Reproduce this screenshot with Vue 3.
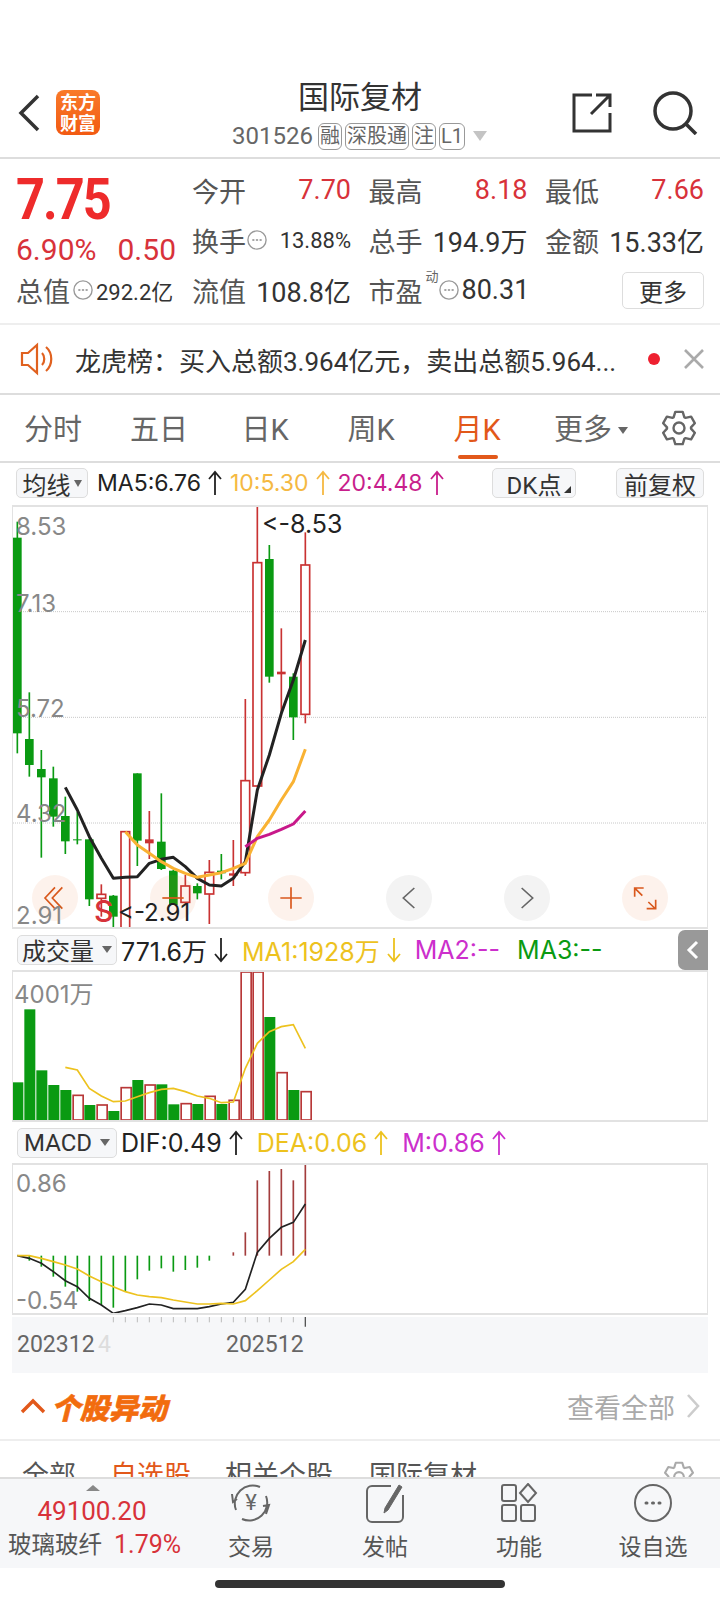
<template>
  <div class="page">
    <header class="head">
      <div class="head-left">
        <svg class="back" viewBox="0 0 24 40"><path d="M21 3 4 20l17 17" /></svg>
        <div class="logo"><span>东方</span><span>财富</span></div>
      </div>
      <div class="head-mid">
        <div class="title">国际复材</div>
        <div class="sub">
          <span class="code">301526</span>
          <span class="tag">融</span>
          <span class="tag">深股通</span>
          <span class="tag">注</span>
          <span class="tag">L1</span>
          <i class="tri-down"></i>
        </div>
      </div>
      <div class="head-right">
        <svg class="share" viewBox="0 0 40 40">
          <path d="M20 2H2v36h36V20M24 2h14v12M37 3 19 21" />
        </svg>
        <svg class="search" viewBox="0 0 46 44">
          <circle cx="21" cy="20" r="18" />
          <path d="m33 32 11 11" />
        </svg>
      </div>
    </header>

    <section class="quote">
      <div class="q-left">
        <div class="price">7.75</div>
        <div class="chg"><span>6.90%</span><span>0.50</span></div>
        <div class="cell">
          <span class="lab">总值</span>
          <svg class="dots" viewBox="0 0 22 22"><circle cx="11" cy="11" r="10" /><path d="M6.5 11h1M10.5 11h1M14.5 11h1" /></svg>
          <span class="val small ml3">292.2亿</span>
        </div>
      </div>
      <div class="q-grid">
        <div class="cell between"><span class="lab">今开</span><span class="val red">7.70</span></div>
        <div class="cell between"><span class="lab">最高</span><span class="val red">8.18</span></div>
        <div class="cell between"><span class="lab">最低</span><span class="val red">7.66</span></div>
        <div class="cell between">
          <span class="lab">换手</span>
          <svg class="dots" viewBox="0 0 22 22"><circle cx="11" cy="11" r="10" /><path d="M6.5 11h1M10.5 11h1M14.5 11h1" /></svg>
          <span class="val small">13.88%</span>
        </div>
        <div class="cell between"><span class="lab">总手</span><span class="val">194.9万</span></div>
        <div class="cell between"><span class="lab">金额</span><span class="val">15.33亿</span></div>
        <div class="cell between"><span class="lab">流值</span><span class="val">108.8亿</span></div>
        <div class="cell">
          <span class="lab">市盈</span>
          <sup class="dyn">动</sup>
          <svg class="dots" viewBox="0 0 22 22"><circle cx="11" cy="11" r="10" /><path d="M6.5 11h1M10.5 11h1M14.5 11h1" /></svg>
          <span class="val ml3">80.31</span>
        </div>
        <div class="cell end"><button class="more">更多</button></div>
      </div>
    </section>

    <section class="notice">
      <svg class="horn" viewBox="0 0 34 34">
        <path d="M2 11h6l9-8v28l-9-8H2zM22 11c3 3 3 9 0 12M26 5c7 6 7 18 0 24" />
      </svg>
      <span class="notice-text">龙虎榜：买入总额3.964亿元，卖出总额5.964...</span>
      <i class="dot"></i>
      <svg class="close" viewBox="0 0 20 20"><path d="m1 1 18 18M19 1 1 19" /></svg>
    </section>

    <nav class="tabs">
      <span v-for="t in tabs" :key="t" class="tab" :class="{ on: t === '月K' }">{{ t }}</span>
      <span class="tab tab-more">更多<i class="tri-down dark"></i></span>
      <svg class="gear" viewBox="0 0 34 36"><path :d="gearPath" /><circle cx="17" cy="18" r="5.5" /></svg>
    </nav>

    <div class="ma-row">
      <span class="sel sel-avg">均线<i class="tri-down dark sm"></i></span>
      <span v-for="m in maItems" :key="m.text" class="ma" :class="m.cls">
        {{ m.text }}
        <svg class="arr" viewBox="0 0 16 26"><path d="M8 25V2M2 9l6-7 6 7" /></svg>
      </span>
      <span class="sel sel-dk">DK点<i class="corner"></i></span>
      <span class="sel sel-fq">前复权</span>
    </div>

    <div class="panel panel-k">
      <svg class="canvas" viewBox="39 21 2082 1260">
        <line v-for="g in [335, 652, 969]" :key="g" x1="39" x2="2121" :y1="g" :y2="g" class="grid" />
        <g v-for="c in candles" :key="c.i">
          <line :x1="c.x" :x2="c.x" :y1="c.w0" :y2="c.w1" :class="c.red ? 'wick-r' : 'wick-g'" />
          <rect :x="c.x - 13" :y="c.b0" width="26" :height="c.b1 - c.b0" :class="c.red ? (c.flat ? 'flat-r' : 'hollow-r') : 'solid-g'" />
        </g>
        <polyline :points="ma5" class="ln ln-k" />
        <polyline :points="ma10" class="ln ln-o" />
        <polyline :points="ma20" class="ln ln-m" />
        <circle cx="165" cy="1194" r="69" class="btn-o" />
        <circle cx="519" cy="1194" r="69" class="btn-o" />
        <circle cx="873" cy="1194" r="69" class="btn-o" />
        <circle cx="1227" cy="1194" r="69" class="btn-g" />
        <circle cx="1581" cy="1194" r="69" class="btn-g" />
        <circle cx="1935" cy="1194" r="69" class="btn-o" />
        <path class="ico-o" d="M165 1162l-30 32 30 32M187 1162l-30 32 30 32" />
        <path class="ico-o" d="M487 1194h64" />
        <path class="ico-o" d="M841 1194h64M873 1162v64" />
        <path class="ico-g" d="M1243 1164l-33 30 33 30" />
        <path class="ico-g" d="M1565 1164l33 30-33 30" />
        <path class="ico-o" d="M1904 1190v-26h27M1905 1165l22 22M1945 1206l22 21M1940 1226h27v-27" />
      </svg>
      <span v-for="l in kLabels" :key="l.t" class="lbl" :class="l.cls" :style="{ left: l.x + 'px', top: l.y + 'px' }">{{ l.t }}</span>
    </div>

    <div class="ind-row">
      <span class="sel sel-ind">成交量<i class="tri-down dark"></i></span>
      <span v-for="m in volItems" :key="m.text" class="ma" :class="[m.cls, { gapr: !m.arrow }]">
        {{ m.text }}
        <svg v-if="m.arrow" class="arr" viewBox="0 0 16 26"><path d="M8 1v23M2 17l6 7 6-7" /></svg>
      </span>
      <div class="side-tab">
        <svg viewBox="0 0 14 22"><path d="M11 3 3 11l8 8" /></svg>
      </div>
    </div>

    <div class="panel panel-vol">
      <svg class="canvas" viewBox="39 156 2082 444">
        <template v-for="b in volBars" :key="b.i">
          <rect v-if="b.red" :x="b.x + 2.5" :y="b.top" width="30" :height="600 - b.top" class="vol-r" />
          <rect v-else :x="b.x" :y="b.top" width="33" :height="600 - b.top" class="solid-g" />
        </template>
        <polyline :points="volMa" class="ln-thin" />
      </svg>
      <span class="lbl" :style="{ left: '1px', top: '8px' }">4001万</span>
    </div>

    <div class="ind-row">
      <span class="sel sel-ind">MACD<i class="tri-down dark"></i></span>
      <span v-for="m in macdItems" :key="m.text" class="ma" :class="m.cls">
        {{ m.text }}
        <svg class="arr" viewBox="0 0 16 26"><path d="M8 25V2M2 9l6-7 6 7" /></svg>
      </span>
    </div>

    <div class="panel panel-macd">
      <svg class="canvas" viewBox="39 735 2082 444">
        <line v-for="b in macdBars" :key="b.x" :x1="b.x" :x2="b.x" y1="1007" :y2="b.y" :class="b.y > 1007 ? 'bar-g' : 'bar-r'" />
        <polyline :points="dif" class="ln-dif" />
        <polyline :points="dea" class="ln-thin" />
      </svg>
      <span class="lbl" :style="{ left: '3px', top: '4px' }">0.86</span>
      <span class="lbl" :style="{ left: '3px', top: '121px' }">-0.54</span>
    </div>

    <div class="axis">
      <svg class="canvas" viewBox="36 1191 2088 168">
        <line v-for="x in ticks" :key="x" :x1="x" :x2="x" y1="1191" y2="1207" class="tick" />
        <line x1="916" x2="916" y1="1191" y2="1220" class="tick-end" />
      </svg>
      <span class="ax-lbl ax-1">202312</span>
      <span class="ax-lbl ax-fade">4</span>
      <span class="ax-lbl ax-2">202512</span>
    </div>

    <div class="move-head">
      <svg class="up" viewBox="0 0 26 16"><path d="M2 14 13 3l11 11" /></svg>
      <span class="move-title">个股异动</span>
      <span class="see-all">查看全部</span>
      <svg class="see-arrow" viewBox="0 0 14 26"><path d="m2 2 10 11L2 24" /></svg>
    </div>

    <div class="sub-tabs">
      <span class="st st-1">全部</span>
      <span class="st st-2">自选股</span>
      <span class="st st-3">相关个股</span>
      <span class="st st-4">国际复材</span>
      <svg class="gear gear-sm" viewBox="0 0 34 36"><path :d="gearPath" /><circle cx="17" cy="18" r="5.5" /></svg>
    </div>

    <footer class="bar">
      <div class="bar-idx">
        <i class="tri-up"></i>
        <div class="idx-num">49100.20</div>
        <div class="idx-line"><span>玻璃玻纤</span><span class="idx-pct">1.79%</span></div>
      </div>
      <div class="bar-item">
        <svg class="bi" viewBox="0 0 44 40">
          <path d="M31 4A18 18 0 0 0 7 27M13 36a18 18 0 0 0 24-23M3 11l1 8 4-3M37 31l3-9-6 1" />
          <text x="22" y="27" class="yen">¥</text>
        </svg>
        <span>交易</span>
      </div>
      <div class="bar-item">
        <svg class="bi" viewBox="0 0 44 40">
          <path d="M28 3H9a5 5 0 0 0-5 5v26a5 5 0 0 0 5 5h26a5 5 0 0 0 5-5V12" />
          <path class="pen" d="M36 2 22 25l-1 5 4-3L39 4z" />
        </svg>
        <span>发帖</span>
      </div>
      <div class="bar-item">
        <svg class="bi" viewBox="0 0 44 40">
          <rect x="5" y="2" width="14" height="16" rx="2" />
          <rect x="5" y="22" width="14" height="16" rx="2" />
          <rect x="24" y="22" width="14" height="16" rx="2" />
          <path d="m31 1 8 9-8 9-8-9z" />
        </svg>
        <span>功能</span>
      </div>
      <div class="bar-item">
        <svg class="bi" viewBox="0 0 44 40">
          <circle cx="22" cy="20" r="18" />
          <path class="dot3" d="M15 20h1M21.5 20h1M28 20h1" />
        </svg>
        <span>设自选</span>
      </div>
    </footer>
    <div class="home"><i></i></div>
  </div>
</template>

<script setup>
const tabs = ['分时', '五日', '日K', '周K', '月K']

const maItems = [
  { text: 'MA5:6.76', cls: 'c-k' },
  { text: '10:5.30', cls: 'c-o' },
  { text: '20:4.48', cls: 'c-m' },
]
const volItems = [
  { text: '771.6万', cls: 'c-k', arrow: true },
  { text: 'MA1:1928万', cls: 'c-y', arrow: true },
  { text: 'MA2:--', cls: 'c-p' },
  { text: 'MA3:--', cls: 'c-g' },
]
const macdItems = [
  { text: 'DIF:0.49', cls: 'c-k' },
  { text: 'DEA:0.06', cls: 'c-y' },
  { text: 'M:0.86', cls: 'c-p' },
]

// [red, wickTop, wickBottom, bodyTop, bodyBottom, flat], in 3x coordinates of the crop
const raw = [
  [0, 65, 760, 113, 700],
  [0, 577, 830, 717, 795],
  [0, 750, 1073, 807, 832],
  [0, 800, 980, 835, 950],
  [0, 890, 1062, 948, 1024],
  [0, 935, 1033, 1018, 1021],
  [0, 1018, 1218, 1018, 1198],
  [1, 1153, 1250, 1183, 1195],
  [0, 1185, 1285, 1187, 1250],
  [1, 995, 1285, 995, 1290],
  [0, 820, 1098, 820, 1022],
  [1, 933, 1077, 1018, 1030, 1],
  [0, 880, 1110, 1025, 1107],
  [0, 1110, 1215, 1112, 1215],
  [1, 1125, 1210, 1158, 1207],
  [0, 1150, 1198, 1158, 1180],
  [1, 1080, 1272, 1117, 1182],
  [0, 1062, 1138, 1112, 1120],
  [1, 1020, 1158, 1120, 1127, 1],
  [1, 597, 1128, 842, 1118],
  [1, 17, 860, 188, 858],
  [0, 135, 548, 177, 530],
  [1, 385, 640, 515, 523, 1],
  [0, 520, 720, 530, 652],
  [1, 97, 670, 195, 643],
]
const candles = raw.map((r, i) => ({
  i, x: 52 + 36 * i, red: !!r[0], w0: r[1], w1: r[2], b0: r[3], b1: r[4], flat: !!r[5],
}))

const line = (start, ys) => ys.map((y, i) => `${52 + 36 * (start + i)},${y}`).join(' ')

const ma5 = line(4, [862, 930, 1010, 1075, 1135, 1132, 1130, 1090, 1078, 1072, 1100, 1135, 1155, 1158, 1135, 1085, 870, 765, 640, 540, 420])
const ma10 = line(9, [995, 1035, 1060, 1085, 1105, 1120, 1132, 1125, 1118, 1105, 1090, 1010, 960, 900, 845, 748])
const ma20 = line(19, [1040, 1015, 1003, 988, 972, 933])

const kLabels = [
  { t: '8.53', x: 3, y: 5 },
  { t: '7.13', x: 3, y: 82 },
  { t: '5.72', x: 3, y: 187 },
  { t: '4.32', x: 3, y: 292 },
  { t: '2.91', x: 3, y: 394 },
  { t: '<-8.53', x: 249, y: 2, cls: 'dark wide' },
  { t: '<-2.91', x: 105, y: 391, cls: 'dark' },
  { t: 'S', x: 81, y: 389, cls: 'buy' },
]

const volTops = [487, 268, 451, 495, 510, -526, 555, -555, 573, -503, 480, -495, 493, 553, -551, 552, -529, 552, -541, -156, -156, 291, -458, 510, -515]
const volBars = volTops.map((t, i) => ({ i, x: 37 + 36 * i, top: Math.abs(t), red: t < 0 }))
const volMa = line(4, [442, 450, 505, 528, 545, 543, 530, 518, 508, 505, 515, 528, 535, 548, 546, 445, 370, 335, 320, 314, 385])

const macdYs = [1022, 1040, 1070, 1100, 1115, 1143, 1155, 1163, 1115, 1078, 1052, 1045, 1055, 1050, 1043, 1022, 1007, 997, 937, 781, 753, 747, 781, 731]
const macdBars = macdYs.map((y, i) => ({ x: 88 + 36 * i, y })).filter(b => b.y !== 1007)
const dif = line(0, [1007, 1015, 1030, 1055, 1082, 1100, 1135, 1155, 1180, 1172, 1163, 1152, 1155, 1166, 1166, 1166, 1160, 1152, 1147, 1108, 997, 955, 922, 907, 852])
const dea = line(0, [1007, 1007, 1015, 1025, 1035, 1047, 1068, 1085, 1100, 1115, 1125, 1130, 1133, 1140, 1146, 1152, 1152, 1150, 1152, 1142, 1112, 1080, 1048, 1025, 988])

const ticks = Array.from({ length: 16 }, (_, i) => 340 + 36 * i)

// six lobed gear outline
const gearPath = (() => {
  const pts = []
  for (let i = 0; i < 6; i++) {
    const a = (i * 60 - 90) * Math.PI / 180
    for (const [r, d] of [[12, -27], [16.5, -13], [16.5, 13], [12, 27]]) {
      const t = a + d * Math.PI / 180
      pts.push(`${(17 + r * Math.cos(t)).toFixed(1)} ${(18 + r * Math.sin(t)).toFixed(1)}`)
    }
  }
  return 'M' + pts.join('L') + 'Z'
})()
</script>

<style scoped>
.page {
  width: 720px;
  height: 1600px;
  overflow: hidden;
  background: #fff;
  display: flex;
  flex-direction: column;
  font-family: Roboto, "Noto Sans CJK SC", sans-serif;
  color: #333;
}
svg { display: block; fill: none; }
i { display: block; }

.tri-down {
  width: 0;
  height: 0;
  border-left: 7px solid transparent;
  border-right: 7px solid transparent;
  border-top: 10px solid #c4c4c4;
}
.tri-down.dark { border-top-color: #666; border-left-width: 5px; border-right-width: 5px; border-top-width: 7px; }
.tri-down.sm { border-left-width: 4.5px; border-right-width: 4.5px; }

/* header */
.head {
  height: 159px;
  box-sizing: border-box;
  padding-top: 78px;
  display: flex;
  border-bottom: 2px solid #ddd;
  flex: none;
}
.head-left { width: 120px; display: flex; align-items: flex-start; padding: 12px 0 0 17px; box-sizing: border-box; gap: 16px; }
.back { width: 24px; height: 40px; margin-top: 3px; }
.back path { stroke: #333; stroke-width: 3.5; }
.logo {
  width: 44px;
  height: 45px;
  margin-left: -1px;
  background: linear-gradient(#f97a2a, #f25a12);
  border-radius: 8px;
  color: #fff;
  font-size: 18px;
  line-height: 21px;
  font-weight: 700;
  text-align: center;
  display: flex;
  flex-direction: column;
  justify-content: center;
}
.head-mid { flex: 1; display: flex; flex-direction: column; align-items: center; }
.title { font-size: 31px; line-height: 40px; color: #333; }
.sub { display: flex; align-items: center; height: 28px; margin-top: 4px; margin-left: -1px; }
.code { font-size: 24px; color: #666; margin-right: 5px; }
.tag {
  font-size: 20px;
  line-height: 25px;
  padding: 0 1px;
  border: 1px solid #999;
  border-radius: 6px;
  color: #666;
  margin-right: 3px;
}
.sub .tri-down { margin-left: 5px; }
.head-right { width: 120px; position: relative; }
.share { position: absolute; left: -28px; top: 15px; width: 40px; height: 40px; }
.share path { stroke: #333; stroke-width: 3; }
.search { position: absolute; left: 52px; top: 13px; width: 46px; height: 44px; }
.search circle, .search path { stroke: #333; stroke-width: 3.5; }

/* quote block */
.quote {
  height: 166px;
  box-sizing: border-box;
  padding: 6px 16px 0 16px;
  display: flex;
  border-bottom: 2px solid #eee;
  flex: none;
}
.q-left { width: 176px; flex: none; display: flex; flex-direction: column; }
.price {
  font-size: 58px;
  line-height: 60px;
  height: 61px;
  font-weight: 700;
  letter-spacing: -2.2px;
  color: #ee2b2b;
  margin-top: 4px;
  transform: scaleX(.87);
  transform-origin: left center;
}
.chg {
  width: 160px;
  display: flex;
  justify-content: space-between;
  font-size: 30px;
  line-height: 40px;
  height: 35px;
  color: #d8323a;
}
.q-grid {
  flex: 1;
  display: grid;
  grid-template-columns: repeat(3, 159px);
  grid-auto-rows: 50px;
  column-gap: 17.5px;
}
.cell { display: flex; align-items: center; height: 50px; white-space: nowrap; }
.between { justify-content: space-between; }
.end { justify-content: flex-end; }
.lab { font-size: 27px; color: #555; }
.val { font-size: 27px; color: #333; }
.val.red { color: #d8323a; }
.val.small { font-size: 22px; }
.val.ml3 { margin-left: 3px; }
.dots { width: 20px; height: 20px; margin-left: 3px; flex: none; }
.between .dots { margin-left: 1px; margin-right: auto; }
.dots circle { stroke: #999; stroke-width: 1.5; }
.dots path { stroke: #888; stroke-width: 1.8; stroke-linecap: round; }
.dyn { font-size: 13px; color: #666; line-height: 13px; margin: -28px 0 0 3px; width: 13px; }
.dyn + .dots { margin-left: 0; }
.more {
  width: 82px;
  height: 37px;
  padding: 0;
  border: 1px solid #ddd;
  border-radius: 5px;
  background: #fff;
  font: inherit;
  font-size: 24px;
  color: #333;
}

/* notice */
.notice {
  height: 70px;
  flex: none;
  box-sizing: border-box;
  border-bottom: 2px solid #ddd;
  display: flex;
  align-items: center;
  padding-left: 20px;
}
.horn { width: 34px; height: 34px; flex: none; }
.horn path { stroke: #e0611f; stroke-width: 2.2; }
.notice-text { font-size: 26px; color: #333; margin-left: 21px; width: 573px; white-space: nowrap; }
.dot { width: 12px; height: 12px; border-radius: 50%; background: #ee2030; flex: none; }
.close { width: 20px; height: 20px; margin-left: 24px; }
.close path { stroke: #aaa; stroke-width: 2.6; }

/* tabs */
.tabs {
  height: 68px;
  flex: none;
  box-sizing: border-box;
  border-bottom: 2px solid #ddd;
  display: flex;
  align-items: center;
  position: relative;
}
.tab {
  width: 106px;
  text-align: center;
  font-size: 29px;
  color: #666;
  box-sizing: border-box;
  padding-top: 4px;
  line-height: 62px;
  position: relative;
  flex: none;
}
.tab.on { color: #e2581a; }
.tab.on::after {
  content: "";
  position: absolute;
  left: 34px;
  right: 32px;
  bottom: 2px;
  height: 4px;
  border-radius: 2px;
  background: #e2581a;
}
.tab-more { width: 90px; margin-left: 16px; display: flex; align-items: center; justify-content: center; gap: 6px; }
.gear { width: 34px; height: 36px; position: absolute; left: 662px; top: 15px; }
.gear path, .gear circle { stroke: #666; stroke-width: 2.4; stroke-linejoin: round; }

/* indicator rows */
.ma-row { height: 42px; flex: none; display: flex; align-items: center; padding: 0 16px 2px; box-sizing: border-box; }
.sel {
  height: 30px;
  box-sizing: border-box;
  border: 1px solid #ddd;
  border-radius: 5px;
  background: #f6f7f9;
  color: #333;
  display: flex;
  align-items: center;
  justify-content: center;
  font-size: 24px;
  flex: none;
  position: relative;
}
.sel-avg { width: 72px; gap: 3px; margin-right: 9px; }
.sel-dk { width: 84px; margin-left: auto; }
.sel-fq { width: 88px; margin-left: 40px; }
.corner {
  position: absolute;
  right: 4px;
  bottom: 4px;
  width: 0;
  height: 0;
  border-left: 7px solid transparent;
  border-bottom: 7px solid #333;
}
.ma {
  display: flex;
  align-items: center;
  font-family: Inter, "Noto Sans CJK SC", sans-serif;
  font-size: 23px;
  white-space: nowrap;
}
.arr { width: 16px; height: 26px; margin: 0 7px 0 6px; flex: none; }
.arr path { stroke: currentColor; stroke-width: 1.8; }
.c-k { color: #222; }
.c-o { color: #f5b942; }
.c-m { color: #c81e8c; }
.c-y { color: #edc21e; }
.c-p { color: #cc2fcc; }
.c-g { color: #0a9a12; }

.ind-row {
  height: 41px;
  flex: none;
  display: flex;
  align-items: center;
  padding-left: 17px;
  gap: 4px;
  position: relative;
}
.sel-ind { width: 100px; gap: 8px; }
.ind-row .ma { margin-right: 2px; font-size: 25px; }
.ind-row .ma.gapr { margin-right: 13px; }
.side-tab {
  position: absolute;
  right: 12px;
  top: 1px;
  width: 30px;
  height: 40px;
  background: #999;
  border-radius: 7px 0 0 7px;
  display: flex;
  align-items: center;
  justify-content: center;
}
.side-tab svg { width: 14px; height: 22px; }
.side-tab path { stroke: #fff; stroke-width: 3; }

/* chart panels */
.panel {
  margin-left: 12px;
  width: 696px;
  box-sizing: border-box;
  border: 1px solid #e2e2e2;
  border-width: 2px 1px;
  position: relative;
  flex: none;
  overflow: hidden;
}
.panel-k { height: 424px; }
.panel-vol { height: 152px; }
.panel-macd { height: 152px; }
.canvas { position: absolute; left: 0; top: 0; width: 100%; height: 100%; }
.grid { stroke: #c8c8c8; stroke-width: 3; stroke-dasharray: 3 3; }
.wick-g { stroke: #0a9a12; stroke-width: 5; }
.wick-r { stroke: #c93232; stroke-width: 5; }
.solid-g { fill: #0a9a12; }
.hollow-r { fill: #fff; stroke: #c93232; stroke-width: 5; }
.flat-r { fill: #c93232; }
.ln { fill: none; stroke-width: 9; stroke-linejoin: round; }
.ln-k { stroke: #222; }
.ln-o { stroke: #f9b233; }
.ln-m { stroke: #c8188a; }
.btn-o { fill: rgba(238, 110, 40, .09); }
.btn-g { fill: #f3f3f3; }
.ico-o { fill: none; stroke: #d9581c; stroke-width: 5; }
.ico-g { fill: none; stroke: #666; stroke-width: 5; }
.lbl {
  position: absolute;
  font-family: Inter, "Noto Sans CJK SC", sans-serif;
  font-size: 24px;
  line-height: 30px;
  color: #888;
  white-space: nowrap;
}
.lbl.dark { color: #222; }
.lbl.wide { font-size: 25px; }
.lbl.buy { color: #d6323a; font-size: 30px; font-weight: 500; }
.vol-r { fill: #fff; stroke: #b83838; stroke-width: 5; }
.ln-thin { fill: none; stroke: #edc21e; stroke-width: 5; }
.ln-dif { fill: none; stroke: #222; stroke-width: 5; }
.bar-g { stroke: #0a9a12; stroke-width: 5; }
.bar-r { stroke: #a33c3c; stroke-width: 5; }

/* time axis */
.axis {
  margin: 2px 0 0 12px;
  width: 696px;
  height: 56px;
  background: #f6f7f9;
  position: relative;
  flex: none;
}
.tick { stroke: #bbb; stroke-width: 3; }
.tick-end { stroke: #555; stroke-width: 4; }
.ax-lbl { position: absolute; top: 13px; font-size: 23px; line-height: 30px; color: #666; }
.ax-1 { left: 5px; }
.ax-fade { left: 86px; color: #ddd; }
.ax-2 { left: 214px; }

/* stock moves */
.move-head {
  height: 68px;
  flex: none;
  box-sizing: border-box;
  display: flex;
  align-items: center;
  padding-left: 20px;
  border-bottom: 2px solid #eee;
}
.up { width: 26px; height: 16px; }
.up path { stroke: #e2581a; stroke-width: 3.4; }
.move-title {
  font-size: 29px;
  font-weight: 900;
  font-style: italic;
  color: #f26c0e;
  -webkit-text-stroke: .6px #f26c0e;
  margin-left: 5px;
}
.see-all { margin-left: auto; font-size: 27px; color: #aaa; }
.see-arrow { width: 14px; height: 26px; margin: 0 20px 0 11px; }
.see-arrow path { stroke: #ccc; stroke-width: 2.6; }

.sub-tabs {
  height: 36px;
  flex: none;
  overflow: hidden;
  position: relative;
  display: flex;
  padding: 16px 0 0 22px;
  box-sizing: border-box;
  font-size: 27px;
  line-height: 38px;
  color: #555;
}
.st { flex: none; }
.st-2 { margin-left: 34px; color: #e2581a; }
.st-3 { margin-left: 34px; }
.st-4 { margin-left: 36px; }
.gear-sm { top: 20px; left: 664px; width: 30px; height: 32px; }
.gear-sm path, .gear-sm circle { stroke: #aaa; }

/* bottom bar */
.bar {
  height: 91px;
  flex: none;
  box-sizing: border-box;
  background: #f6f7f9;
  border-top: 2px solid #ddd;
  display: flex;
}
.bar-idx { width: 184px; flex: none; position: relative; text-align: center; }
.tri-up {
  position: absolute;
  left: 86px;
  top: 6px;
  width: 0;
  height: 0;
  border-left: 7px solid transparent;
  border-right: 7px solid transparent;
  border-bottom: 6px solid #888;
}
.idx-num { font-size: 26px; line-height: 32px; color: #d8323a; margin-top: 16px; }
.idx-line { display: flex; font-size: 23.5px; line-height: 32px; color: #555; padding-left: 8px; margin-top: 2px; gap: 12px; white-space: nowrap; }
.idx-pct { color: #d8323a; font-size: 25px; }
.bar-item {
  width: 134px;
  flex: none;
  display: flex;
  flex-direction: column;
  align-items: center;
  font-size: 23px;
  line-height: 30px;
  color: #555;
}
.bi { width: 44px; height: 40px; margin: 4px 0 10px; }
.bi path, .bi circle, .bi rect { stroke: #666; stroke-width: 2; }
.bi .pen { fill: #666; stroke-width: 1; }
.bi .dot3 { stroke-width: 3; stroke-linecap: round; }
.yen { fill: #666; font-size: 22px; text-anchor: middle; }

.home { flex: 1; position: relative; }
.home i { position: absolute; left: 215px; top: 12px; width: 290px; height: 8px; border-radius: 4px; background: #333; }
</style>
